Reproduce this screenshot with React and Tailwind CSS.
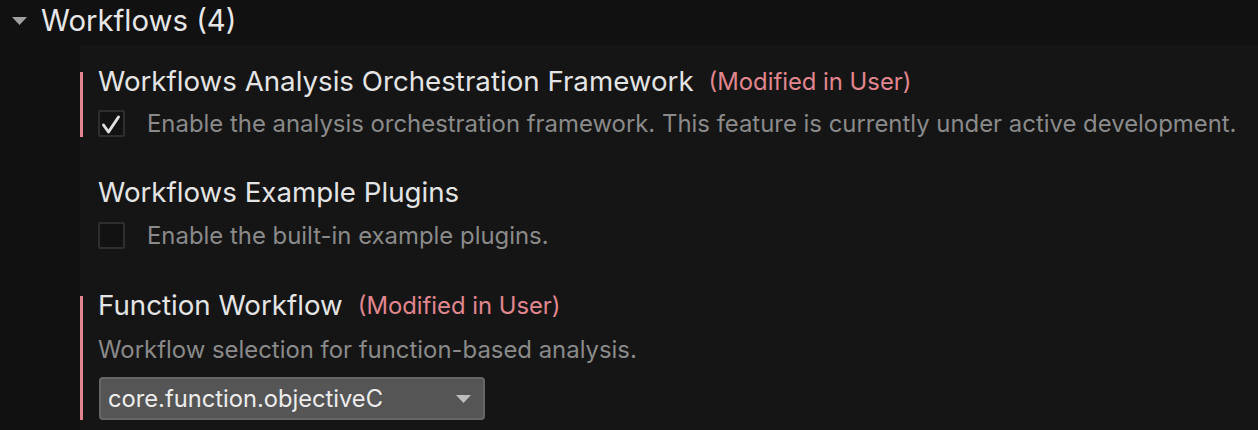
function Checkbox({checked}) {
    return (
        <div className="w-[27px] h-[27px] shrink-0 border-2 border-[#2e2e2e] bg-[#121212] rounded-[2px] flex items-center justify-center">
            {checked && (
                <svg width="27" height="27" viewBox="0 0 27 27" className="-m-[2px]">
                    <path d="M5.5 15 L10.5 22 L20.5 7" fill="none" stroke="#dedede" strokeWidth="3" strokeLinecap="round" strokeLinejoin="round"/>
                </svg>
            )}
        </div>
    )
}

function Title({children, modified}) {
    return (
        <div className="flex items-center h-[20px] whitespace-nowrap">
            <span className="text-[27.7px] leading-none text-[#e4e4e4]">{children}</span>
            {modified && <span className="ml-[15px] text-[23.8px] leading-none text-[#e0868f]">(Modified in User)</span>}
        </div>
    )
}

export default function App() {
    return (
        <div className="w-[1258px] h-[430px] bg-[#111111] overflow-hidden" style={{fontFamily: 'Inter, "Noto Sans", sans-serif'}}>
            <div className="flex items-center h-[45px] pl-[12px] pb-[4px]">
                <svg width="15" height="8" viewBox="0 0 15 8">
                    <path d="M0 0 L15 0 L7.5 8 Z" fill="#a0a0a0"/>
                </svg>
                <span className="ml-[14px] text-[29.3px] leading-none text-[#e6e6e6]">Workflows (4)</span>
            </div>
            <div className="ml-[80px] bg-[#151515] h-full pt-[27px]">
                <div className="border-l-[3px] border-[#e0848f] pl-[15px]">
                    <Title modified>Workflows Analysis Orchestration Framework</Title>
                    <div className="flex items-center h-[27px] mt-[18px]">
                        <Checkbox checked/>
                        <span className="ml-[22px] text-[23.9px] leading-[27px] text-[#8a8a8a] whitespace-nowrap">Enable the analysis orchestration framework. This feature is currently under active development.</span>
                    </div>
                </div>
                <div className="pl-[18px] mt-[46px]">
                    <Title>Workflows Example Plugins</Title>
                    <div className="flex items-center h-[27px] mt-[19px]">
                        <Checkbox/>
                        <span className="ml-[22px] text-[23.9px] leading-[27px] text-[#8a8a8a] whitespace-nowrap">Enable the built-in example plugins.</span>
                    </div>
                </div>
                <div className="border-l-[3px] border-[#e0848f] pl-[15px] mt-[47px] h-[124px]">
                    <Title modified>Function Workflow</Title>
                    <div className="mt-[24px] h-[20px] flex items-center text-[23.9px] leading-none text-[#8a8a8a] whitespace-nowrap">Workflow selection for function-based analysis.</div>
                    <div className="mt-[17px] w-[386px] h-[43px] ml-[1px] rounded-[4px] border-2 border-[#666666] bg-[#555555] flex items-center justify-between pl-[7px] pr-[12px]">
                        <span className="text-[23.7px] leading-none text-[#ededed]">core.function.objectiveC</span>
                        <svg width="15" height="8" viewBox="0 0 15 8">
                            <path d="M0 0 L15 0 L7.5 8 Z" fill="#bdbdbd"/>
                        </svg>
                    </div>
                </div>
            </div>
        </div>
    )
}
